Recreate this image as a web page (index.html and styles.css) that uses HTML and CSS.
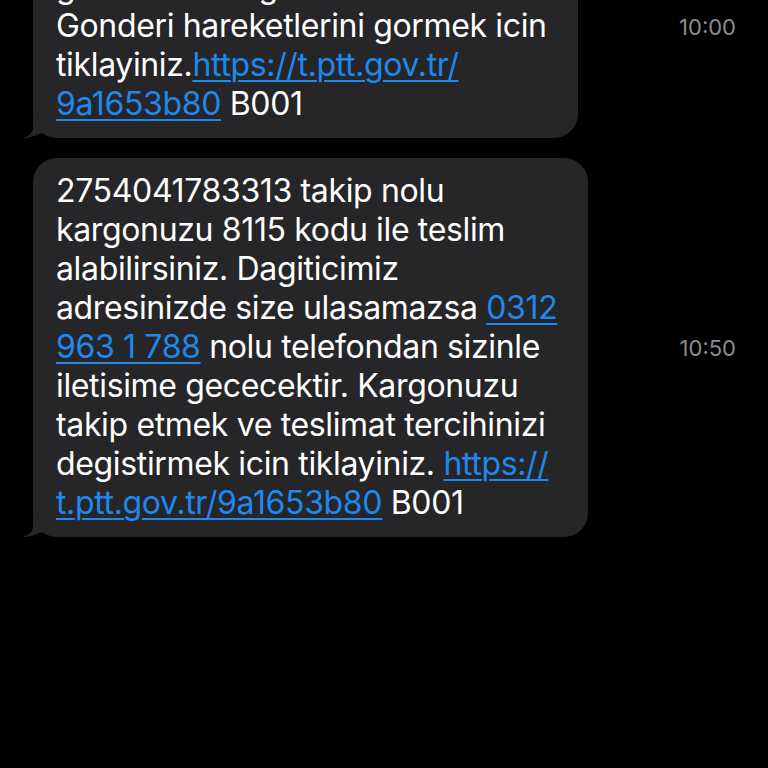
FILE: index.html
```html
<!DOCTYPE html>
<html lang="tr">
<head>
    <meta charset="UTF-8">
    <meta name="viewport" content="width=device-width, initial-scale=1.0">
    <title>Mesajlar</title>
    <link rel="stylesheet" href="styles.css">
</head>
<body>

<!-- mesaj listesi: ekran ilk balonun ortasindan basliyor -->
<div class="thread">

    <div class="msg">
        <div class="bubble">
            2754041783313 takip nolu<br>
            gonderiniz dagitima cikarilmistir.<br>
            Gonderi hareketlerini gormek icin<br>
            tiklayiniz.<a href="#">https://t.ptt.gov.tr/<br>9a1653b80</a> B001
            <svg class="tail" width="30" height="20" viewBox="0 0 30 20">
                <path d="M12 0 L12 10 C12 15 7 19 0 20 C7 20.5 13 18.5 18 16 L22 15 L24 0 Z"/>
            </svg>
        </div>
        <span class="time">10:00</span>
    </div>

    <div class="msg">
        <div class="bubble">
            2754041783313 takip nolu<br>
            kargonuzu 8115 kodu ile teslim<br>
            alabilirsiniz. Dagiticimiz<br>
            adresinizde size ulasamazsa <a href="#">0312<br>963 1 788</a> nolu telefondan sizinle<br>
            iletisime gececektir. Kargonuzu<br>
            takip etmek ve teslimat tercihinizi<br>
            degistirmek icin tiklayiniz. <a href="#">https://<br>t.ptt.gov.tr/9a1653b80</a> B001
            <svg class="tail" width="30" height="20" viewBox="0 0 30 20">
                <path d="M12 0 L12 10 C12 15 7 19 0 20 C7 20.5 13 18.5 18 16 L22 15 L24 0 Z"/>
            </svg>
        </div>
        <span class="time">10:50</span>
    </div>

</div>

</body>
</html>
```

FILE: styles.css
```css
body {
    margin: 0;
    background: #000;
    font-family: Inter, "Liberation Sans", Arial, sans-serif;
    color: #fff;
    overflow: hidden;
}
.thread {
    display: flex;
    flex-direction: column;
    gap: 20px;
    margin-top: -85px;
}
.msg {
    display: flex;
    align-items: center;
}
.bubble {
    position: relative;
    margin-left: 33px;
    padding: 13px 31px 15px 23px;
    background: #262628;
    border-radius: 24px;
    font-size: 32px;
    line-height: 39px;
    letter-spacing: -0.35px;
    white-space: nowrap;
}
.bubble a {
    color: #1f88ee;
    text-decoration: underline;
    text-decoration-thickness: 2px;
    text-underline-offset: 4px;
}
.tail {
    position: absolute;
    left: -12px;
    bottom: 0;
    fill: #262628;
}
.time {
    margin-left: auto;
    margin-right: 32px;
    font-size: 22px;
    color: #8c8c90;
}
```
